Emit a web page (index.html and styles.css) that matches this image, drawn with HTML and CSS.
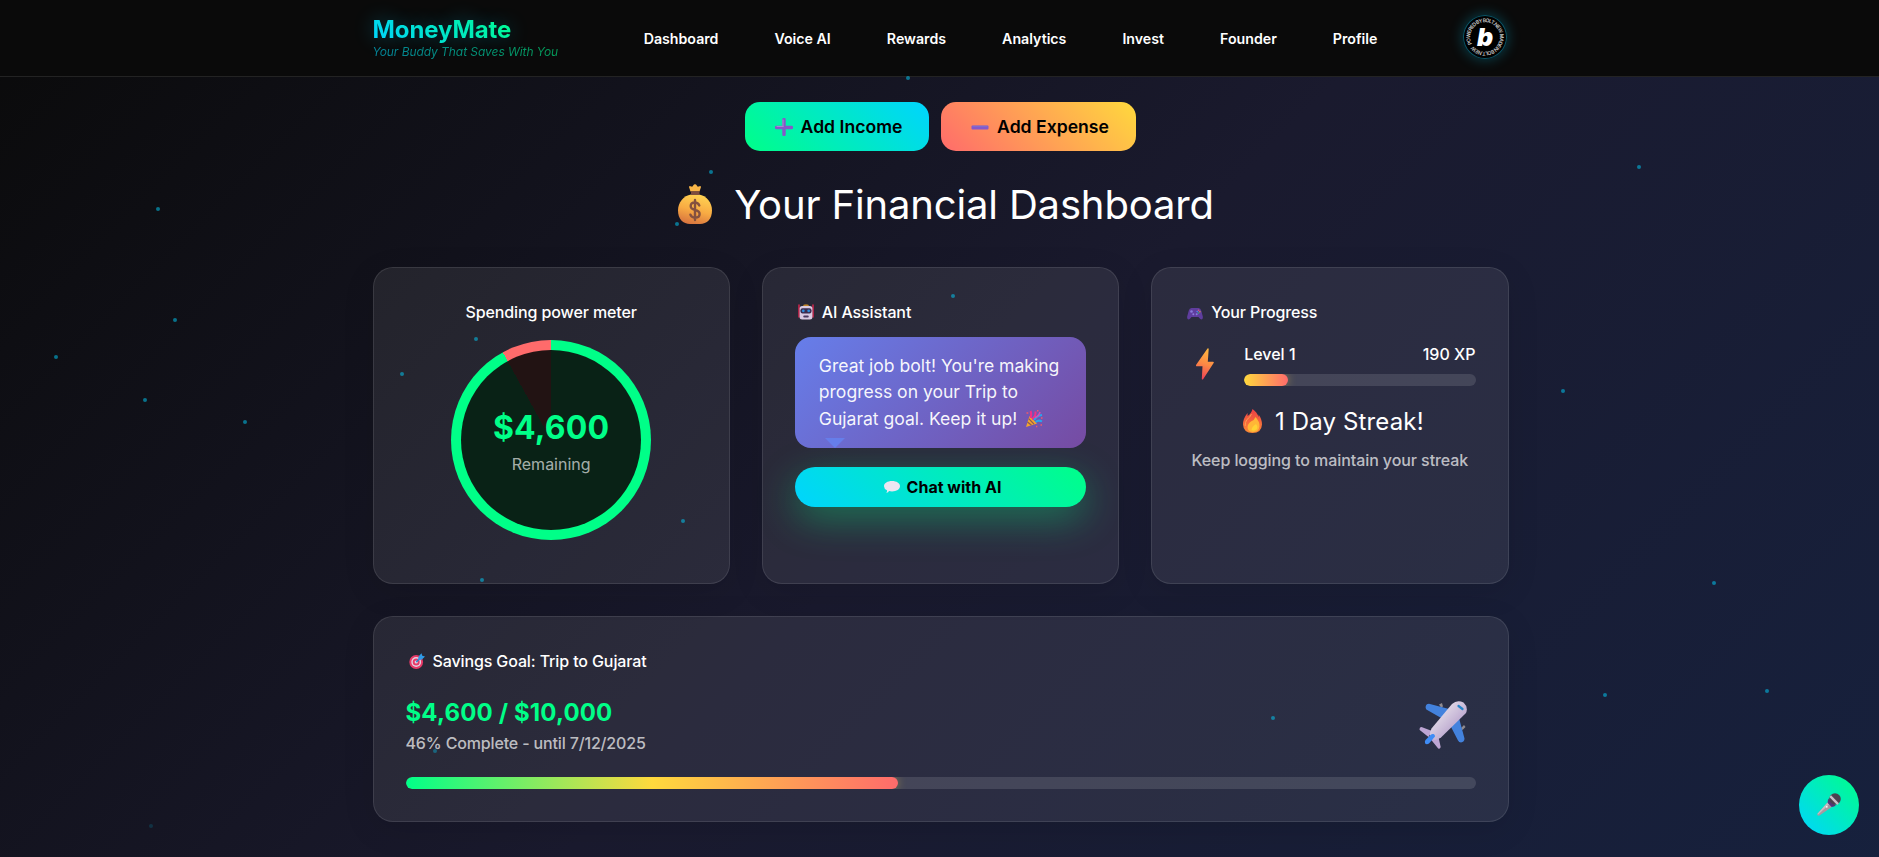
FILE: index.html
```html
<!DOCTYPE html>
<html lang="en">
<head>
  <meta charset="UTF-8">
  <title>MoneyMate</title>
  <link rel="stylesheet" href="styles.css">
</head>
<body>
  <header class="header">
    <div class="header-inner">
      <div class="logo">
        <div class="logo-name">MoneyMate</div>
        <div class="logo-tagline">Your Buddy That Saves With You</div>
      </div>
      <nav class="nav">
        <a>Dashboard</a>
        <a>Voice AI</a>
        <a>Rewards</a>
        <a>Analytics</a>
        <a>Invest</a>
        <a>Founder</a>
        <a>Profile</a>
      </nav>
      <div class="badge">
        <svg viewBox="0 0 44 44" width="44" height="44">
          <defs><path id="ring" d="M22 36.800a14.800 14.800 0 1 1 .01 0"/></defs>
          <text class="badge-text" transform="rotate(62 22 22)"><textPath href="#ring" textLength="90">POWERED BY BOLT.NEW MADE IN BOLT.NEW</textPath></text>
          <text class="badge-b" x="22" y="30.500" text-anchor="middle">b</text>
        </svg>
      </div>
    </div>
  </header>

  <main class="main">
    <div class="actions">
      <button class="btn btn-income">
        <svg viewBox="0 0 18 18" width="18" height="18"><path d="M9 1.500v15M1.500 9.500h15" stroke="#8658c8" stroke-width="3.400" stroke-linecap="round"/><path d="M8 2v6.500M2 8.500h6" stroke="#a98ad0" stroke-width="1" stroke-linecap="round"/></svg>
        Add Income
      </button>
      <button class="btn btn-expense">
        <svg viewBox="0 0 18 18" width="18" height="18"><rect x=".5" y="7.500" width="17" height="4" rx="1" fill="#8658c8"/><path d="M1.500 8.300h15" stroke="#7b72cf" stroke-width="1"/></svg>
        Add Expense
      </button>
    </div>

    <h1 class="title">
      <svg viewBox="0 0 34 40" width="34" height="40">
        <defs>
          <linearGradient id="bag" x1=".7" y1="0" x2=".4" y2="1"><stop offset="0" stop-color="#ffd453"/><stop offset=".55" stop-color="#f8ab43"/><stop offset="1" stop-color="#d9763f"/></linearGradient>
        </defs>
        <path d="M12.500 7.500 11 3q.3-1.300 1.500-.8l1.700.6L16 .6q1-.8 2 0l1.800 2.200 1.700-.6q1.200-.5 1.500.8l-1.500 4.500z" fill="#f9b648"/>
        <path d="M13 10.500C5.500 11.500 0 18.500 0 26.500 0 35 5 40 12 40h10c7 0 12-5 12-13.500 0-8-5.500-15-13-16z" fill="url(#bag)"/>
        <path d="M13 7.300h8.500v3.600H13z" fill="#7d4c3e"/>
        <path d="M21.300 21.500q-1.300-3-4.300-3-4.300 0-4.300 3.600 0 3 4.300 3.900 4.600 1 4.600 4 0 3.700-4.600 3.700-3.500 0-4.600-3M17 16v20" fill="none" stroke="#84513f" stroke-width="2.400" stroke-linecap="round"/>
      </svg>
      Your Financial Dashboard
    </h1>

    <section class="grid">
      <div class="card card-meter">
        <h3>Spending power meter</h3>
        <div class="meter">
          <div class="meter-inner">
            <div class="meter-amount">$4,600</div>
            <div class="meter-label">Remaining</div>
          </div>
        </div>
      </div>

      <div class="card">
        <h3>
          <svg viewBox="0 0 16 16" width="16" height="16"><path d="M1 1v12M15 1v12" stroke="#e0244f" stroke-width="1.400" stroke-linecap="round"/><path d="M5 1.800Q5 .6 8 .6t3 1.200z" fill="#f5a524"/><rect x="1.600" y="2" width="12.800" height="13.500" rx="2.500" fill="#d9cbe2"/><rect x="2.500" y="4.200" width="11" height="5.300" rx="2" fill="#3b2c50"/><circle cx="5.300" cy="6.800" r="1.400" fill="#2e8fdd"/><circle cx="10.700" cy="6.800" r="1.400" fill="#2e8fdd"/><rect x="5.300" y="11.500" width="5.400" height="2" rx=".8" fill="#4b3a60"/></svg>
          AI Assistant
        </h3>
        <div class="bubble">
          Great job bolt! You're making progress on your Trip to Gujarat goal. Keep it up!
          <svg viewBox="0 0 18 18" width="18" height="18"><path d="M1 17 4.500 6l7.500 7.500z" fill="#f4a62c"/><path d="m2.500 12 4 3.200M3.700 8.600l5.300 5.500" stroke="#8d5a55" stroke-width="1.300"/><path d="M5.500 8Q7 4 5.500 1M7 9q4-2 3.500-7.500" stroke="#f0308a" stroke-width="2" fill="none"/><path d="M9 10q3-4.500 8-5M10.500 12q3-2.500 6.500-.5" stroke="#2aa5ee" stroke-width="2" fill="none"/><path d="M10 7.500Q14 6 15 2" stroke="#d54fb5" stroke-width="1.600" fill="none"/><path d="M1.500 3h1.800M12 .8h1.500M15.500 15h1.500M11 16.500h1.300M16 8h1.500" stroke="#f05a6a" stroke-width="1.500"/></svg>
        </div>
        <button class="chat-btn">
          <svg viewBox="0 0 16 12" width="16" height="12"><path d="M8 0c4.500 0 8 2.200 8 5.200s-3.500 5.200-8 5.200q-1.600 0-3-.3Q4.300 12 2.300 11.800q.9-1 .7-2.600Q0 7.900 0 5.200C0 2.200 3.500 0 8 0z" fill="#ece6f2"/></svg>
          Chat with AI
        </button>
      </div>

      <div class="card">
        <h3>
          <svg viewBox="0 0 16 16" width="16" height="16"><path d="M4.500 4h7q2 0 2.700 2.500l1.600 6q.4 2.800-1.500 2.900-1 0-2-1.300L11.500 13h-7l-.8 1.100q-1 1.300-2 1.300-1.900-.1-1.500-2.900l1.600-6Q2.500 4 4.500 4z" fill="#5f3d9e"/><circle cx="4.500" cy="7.500" r="1.300" fill="#8a7ad8"/><circle cx="6.300" cy="10.300" r="1" fill="#8a7ad8"/><circle cx="9.700" cy="10.300" r="1" fill="#8a7ad8"/><circle cx="11.500" cy="6.300" r=".8" fill="#e04f7c"/><circle cx="12.900" cy="7.700" r=".8" fill="#e08a4f"/><circle cx="11.500" cy="9" r=".8" fill="#33b26e"/><circle cx="10.200" cy="7.600" r=".8" fill="#4a8fe0"/></svg>
          Your Progress
        </h3>
        <div class="level">
          <svg class="bolt" viewBox="0 0 18 32" width="18" height="32"><defs><linearGradient id="bolt" x1=".6" y1="0" x2=".4" y2="1"><stop offset="0" stop-color="#ffb83f"/><stop offset=".5" stop-color="#fb8a45"/><stop offset="1" stop-color="#ee3f58"/></linearGradient></defs><path d="M11.500.5 0 17q-.2 1.200.8 1.200H6.500L5.800 31q.3 1 1.300.3L17.800 14.800q.2-1-.8-1.100h-5.200L12.700 1q-.2-1-1.200-.5z" fill="url(#bolt)"/></svg>
          <div class="level-info">
            <div class="level-row"><span>Level 1</span><span>190 XP</span></div>
            <div class="bar"><div class="bar-fill bar-xp" style="width: 19%"></div></div>
          </div>
        </div>
        <div class="streak">
          <svg viewBox="0 0 19 24" width="19" height="24"><defs><linearGradient id="fire" x1=".5" y1="0" x2=".5" y2="1"><stop offset="0" stop-color="#ee3f45"/><stop offset="1" stop-color="#fb8a35"/></linearGradient></defs><path d="M9.500 0Q14 3 15.500 8q.3-1.500 0-2.500Q19 10 19 15.500 18.500 24 9.500 24 .5 24 0 15.500 0 9.500 4.500 4q.2 1.500 0 3Q8.500 4.500 9.500 0z" fill="url(#fire)"/><path d="M12.500 8q4.500 5 4 9.500-.8 5.500-6.500 5.500-5 0-5.500-4.500Q4.500 15 8 12.500 11.500 11 12.500 8z" fill="#ffb637"/><path d="M8.500 5Q7 8.500 4 10.500 2 13 2.200 17" fill="none" stroke="#f9a050" stroke-width="1"/><path d="M13 15q2.500 3 .5 5.500-2.500 2-5 .5Q8.500 18 13 15z" fill="#ffd335"/></svg>
          1 Day Streak!
        </div>
        <p class="streak-note">Keep logging to maintain your streak</p>
      </div>
    </section>

    <section class="card goal">
      <h3>
        <svg viewBox="0 0 16 16" width="16" height="16"><circle cx="7.200" cy="9" r="6.900" fill="#e83a68"/><circle cx="7.200" cy="9" r="4.900" fill="#e5d3e4"/><circle cx="7.200" cy="9" r="3.500" fill="#e83a68"/><circle cx="7.200" cy="9" r="1.600" fill="#e5d3e4"/><path d="M7.300 9 12 4.300" stroke="#2386cf" stroke-width="1.500"/><path d="M9 7 9.700 3.300 12.500.2l.8 2.500 2.700.9-3.100 2.900z" fill="#2f9ae6"/></svg>
        Savings Goal: Trip to Gujarat
      </h3>
      <div class="goal-row">
        <div>
          <div class="goal-amount">$4,600 / $10,000</div>
          <div class="goal-note">46% Complete - until 7/12/2025</div>
        </div>
        <svg class="plane" viewBox="0 0 48 48" width="48" height="48">
          <defs><linearGradient id="body" x1="0" y1="0" x2="1" y2="1"><stop offset=".25" stop-color="#e3dce8"/><stop offset=".7" stop-color="#bba7cf"/></linearGradient></defs>
          <path d="M20 3.500l3-1.500 1 3.500-2 1zM42 27l3-3 1.500 2-3 3z" fill="#8f8a8f"/>
          <path d="M30 8 10 2.800Q6.500 3 6.600 6.500q.2 2 1.600 2.600L24 18zM40 17l5.500 20.500q0 3.500-3.500 4-2 0-3-2L31 24z" fill="#4382dd"/>
          <path d="M13 30 2.500 26Q0 26.300.7 29L9.500 36zM19 34l2.700 12q-.8 2.800-2.700 1.300L11.500 38z" fill="#bda5d3"/>
          <path d="M33 3Q38-1.500 44.500 1.500q5 4.500 2.500 10.500L22 36.500q-5.500 4-9.500 1.300Q9.300 34 12.500 27.500z" fill="url(#body)"/>
          <path d="M14.500 33q1.700.7 1.500 2.500l-6 7q-2.500 1.500-4-.2-.5-2 .5-3.300l5-5q1.500-1.500 3-1z" fill="#3f8cf5"/>
          <path d="m39.500 5 4 3" stroke="#2583c7" stroke-width="2.200" stroke-linecap="round"/>
        </svg>
      </div>
      <div class="bar"><div class="bar-fill bar-goal" style="width: 46%"></div></div>
    </section>
  </main>

  <div class="particles">
    <i style="left:906px;top:76px"></i>
    <i style="left:709px;top:170px"></i>
    <i style="left:675px;top:222px"></i>
    <i style="left:156px;top:207px"></i>
    <i style="left:173px;top:318px"></i>
    <i style="left:54px;top:355px"></i>
    <i style="left:143px;top:398px"></i>
    <i style="left:243px;top:420px"></i>
    <i style="left:1637px;top:165px"></i>
    <i style="left:1561px;top:389px"></i>
    <i style="left:1712px;top:581px"></i>
    <i style="left:1603px;top:693px"></i>
    <i style="left:1765px;top:689px"></i>
    <i style="left:1271px;top:716px"></i>
    <i style="left:474px;top:337px"></i>
    <i style="left:400px;top:372px"></i>
    <i style="left:681px;top:519px"></i>
    <i style="left:480px;top:578px"></i>
    <i style="left:951px;top:294px"></i>
    <i class="dim" style="left:433px;top:749px"></i>
    <i class="faint" style="left:149px;top:824px"></i>
  </div>

  <button class="mic">
    <svg viewBox="0 0 24 24" width="24" height="24"><path d="M10.500 9.500.5 20.800q-.8 2 1.600 2L15.500 13.500z" fill="#a8989f"/><path d="M10.500 9.500.5 20.800l.4 1L12.500 11z" fill="#c9bcc4"/><path d="M11.500 5.500q-1 2.500-.8 4.500l4 4q2.500-.2 4-1.500z" fill="#54357a"/><circle cx="18" cy="6" r="5.800" fill="#4b4350"/><path d="m13.200 3.200 7.800 8" stroke="#c9c0ca" stroke-width="2.400"/><circle cx="9.800" cy="13.800" r=".9" fill="#fff"/></svg>
  </button>
</body>
</html>
```
FILE: styles.css
```css
* {
  margin: 0;
  padding: 0;
  box-sizing: border-box;
}
body {
  font-family: Inter, sans-serif;
  color: #fff;
  height: 857px;
  overflow: hidden;
  background: linear-gradient(135deg, #0a0a0a 0%, #1a1a2e 50%, #16213e 100%) no-repeat;
  background-size: 100% 960px;
}
button {
  border: none;
  font-family: inherit;
  color: #000;
  cursor: pointer;
}
svg {
  flex-shrink: 0;
}

/* header */
.header {
  height: 77px;
  padding-left: 2px;
  background: #0a0a0a;
  border-bottom: 1px solid #232323;
}
.header-inner {
  width: 1136px;
  height: 74px;
  margin: 0 auto;
  display: flex;
  align-items: center;
  justify-content: space-between;
}
.logo {
  width: 185px;
  margin-top: -1px;
}
.logo-name {
  width: max-content;
  font-size: 24px;
  font-weight: 700;
  line-height: 30px;
  letter-spacing: -0.1px;
  background: linear-gradient(45deg, #00d4ff, #00ff88);
  -webkit-background-clip: text;
  color: transparent;
  text-shadow: 0 0 20px rgba(0, 212, 255, 0.3);
}
.logo-tagline {
  width: max-content;
  margin-top: -1px;
  font-size: 12px;
  font-style: italic;
  line-height: 15px;
  letter-spacing: -0.06px;
  opacity: 0.6;
  background: linear-gradient(45deg, #00d4ff, #00ff88);
  -webkit-background-clip: text;
  color: transparent;
}
.nav {
  display: flex;
  gap: 56px;
  padding-top: 2px;
  font-size: 14.2px;
  font-weight: 600;
}
.badge {
  width: 44px;
  height: 44px;
  margin-right: 1px;
  border-radius: 50%;
  background: #000;
  box-shadow: inset 0 0 0 1px #0b5365, 0 0 14px rgba(0, 212, 255, 0.3);
}
.badge svg {
  display: block;
}
.badge-text {
  font-size: 5.2px;
  font-weight: 600;
  fill: #c4c4c4;
}
.badge-b {
  font-size: 25px;
  font-weight: 900;
  font-style: italic;
  fill: #fff;
}

/* main */
.main {
  padding: 25px 0 0 2px;
  display: flex;
  flex-direction: column;
  align-items: center;
}
.actions {
  display: flex;
  gap: 12px;
  margin-right: 1px;
}
.btn {
  height: 49px;
  padding-left: 4px;
  border-radius: 15px;
  display: flex;
  align-items: center;
  justify-content: center;
  gap: 8px;
  font-size: 17.6px;
  font-weight: 600;
}
.btn-income {
  width: 184px;
  background: linear-gradient(45deg, #00ff88, #00d4ff);
}
.btn-expense {
  width: 195px;
  background: linear-gradient(45deg, #ff6b6b, #ffd93d);
}
.title {
  display: flex;
  align-items: center;
  gap: 22px;
  height: 48px;
  margin-top: 29px;
  padding-left: 11px;
  font-size: 40px;
  font-weight: 400;
  letter-spacing: -0.15px;
}
.grid {
  width: 1136px;
  margin-top: 39px;
  display: grid;
  grid-template-columns: repeat(3, 1fr);
  gap: 32px;
}
.card {
  padding: 32px;
  background: rgba(255, 255, 255, 0.08);
  border: 1px solid rgba(255, 255, 255, 0.1);
  border-radius: 20px;
  box-shadow: 0 8px 32px rgba(0, 0, 0, 0.1);
}
.grid .card {
  height: 317px;
}
.card h3 {
  display: flex;
  align-items: center;
  gap: 8px;
  height: 24px;
  padding-left: 3px;
  font-size: 16px;
  font-weight: 500;
  letter-spacing: -0.12px;
}

/* spending meter */
.card-meter {
  display: flex;
  flex-direction: column;
  align-items: center;
}
.card-meter h3 {
  padding: 0;
}
.meter {
  width: 200px;
  height: 200px;
  margin-top: 16px;
  padding: 10px;
  border-radius: 50%;
  background: conic-gradient(#00ff88 0 92%, #ff6b6b 92% 100%);
}
.meter-inner {
  height: 180px;
  padding-top: 58px;
  border-radius: 50%;
  background: rgba(10, 10, 10, 0.9);
  text-align: center;
}
.meter-amount {
  font-size: 32px;
  font-weight: 700;
  line-height: 40px;
  letter-spacing: 0.2px;
  color: #00ff88;
}
.meter-label {
  font-size: 16px;
  line-height: 24px;
  margin-top: 4px;
  color: rgba(255, 255, 255, 0.65);
}

/* assistant */
.bubble {
  position: relative;
  height: 111px;
  margin-top: 13px;
  padding: 16px 24px;
  border-radius: 16px;
  background: linear-gradient(135deg, #667eea, #764ba2);
  font-size: 17.6px;
  line-height: 26.4px;
  letter-spacing: -0.03px;
  color: rgba(255, 255, 255, 0.95);
}
.bubble svg {
  vertical-align: -3px;
  margin-left: 3px;
}
.bubble::after {
  content: "";
  position: absolute;
  left: 30px;
  bottom: 0;
  border: 10px solid transparent;
  border-top-color: #667eea;
  border-bottom: 0;
}
.chat-btn {
  width: 100%;
  height: 40px;
  margin-top: 19px;
  padding-left: 4px;
  border-radius: 20px;
  display: flex;
  align-items: center;
  justify-content: center;
  gap: 7px;
  font-size: 16px;
  font-weight: 700;
  background: linear-gradient(45deg, #00d4ff, #00ff88);
  box-shadow: 0 12px 38px rgba(0, 255, 136, 0.35);
}

/* progress */
.level {
  display: flex;
  margin-top: 18px;
  padding-left: 12px;
}
.bolt {
  margin-top: 6px;
}
.level-info {
  flex: 1;
  margin-left: 30px;
}
.level-row {
  display: flex;
  justify-content: space-between;
  height: 24px;
  line-height: 24px;
  margin-bottom: 8px;
  font-weight: 500;
}
.bar {
  height: 12px;
  border-radius: 6px;
  background: rgba(255, 255, 255, 0.12);
  overflow: hidden;
}
.bar-fill {
  height: 12px;
  border-radius: 6px;
  box-shadow: 0 0 10px rgba(255, 217, 61, 0.4);
}
.bar-xp {
  background: linear-gradient(90deg, #ffd93d, #ff6b6b);
}
.bar-goal {
  background: linear-gradient(90deg, #00ff88, #ffd93d, #ff6b6b);
}
.streak {
  display: flex;
  align-items: center;
  justify-content: center;
  gap: 13px;
  height: 36px;
  margin-top: 17px;
  padding-left: 7px;
  font-size: 24px;
  letter-spacing: 0.15px;
}
.streak-note {
  margin-top: 9px;
  line-height: 24px;
  text-align: center;
  font-weight: 450;
  letter-spacing: -0.08px;
  color: rgba(255, 255, 255, 0.7);
}

/* savings goal */
.goal {
  width: 1136px;
  height: 206px;
  margin-top: 32px;
}
.goal-row {
  display: flex;
  justify-content: space-between;
  height: 64px;
  margin: 21px 9px 19px 0;
}
.goal-amount {
  margin-top: 1px;
  font-size: 24px;
  font-weight: 700;
  line-height: 36px;
  letter-spacing: 0.15px;
  color: #00ff88;
}
.goal-note {
  line-height: 24px;
  font-weight: 450;
  letter-spacing: -0.15px;
  color: rgba(255, 255, 255, 0.7);
}
.plane {
  margin-top: 7px;
}

/* floating dots */
.particles i {
  position: absolute;
  width: 4px;
  height: 4px;
  border-radius: 50%;
  background: #00d4ff;
  opacity: 0.5;
}
.particles .dim {
  opacity: 0.35;
}
.particles .faint {
  opacity: 0.15;
}

.mic {
  position: fixed;
  right: 20px;
  bottom: 22px;
  width: 60px;
  height: 60px;
  border-radius: 50%;
  display: flex;
  align-items: center;
  justify-content: center;
  background: linear-gradient(45deg, #00d4ff, #00ff88);
}
```
